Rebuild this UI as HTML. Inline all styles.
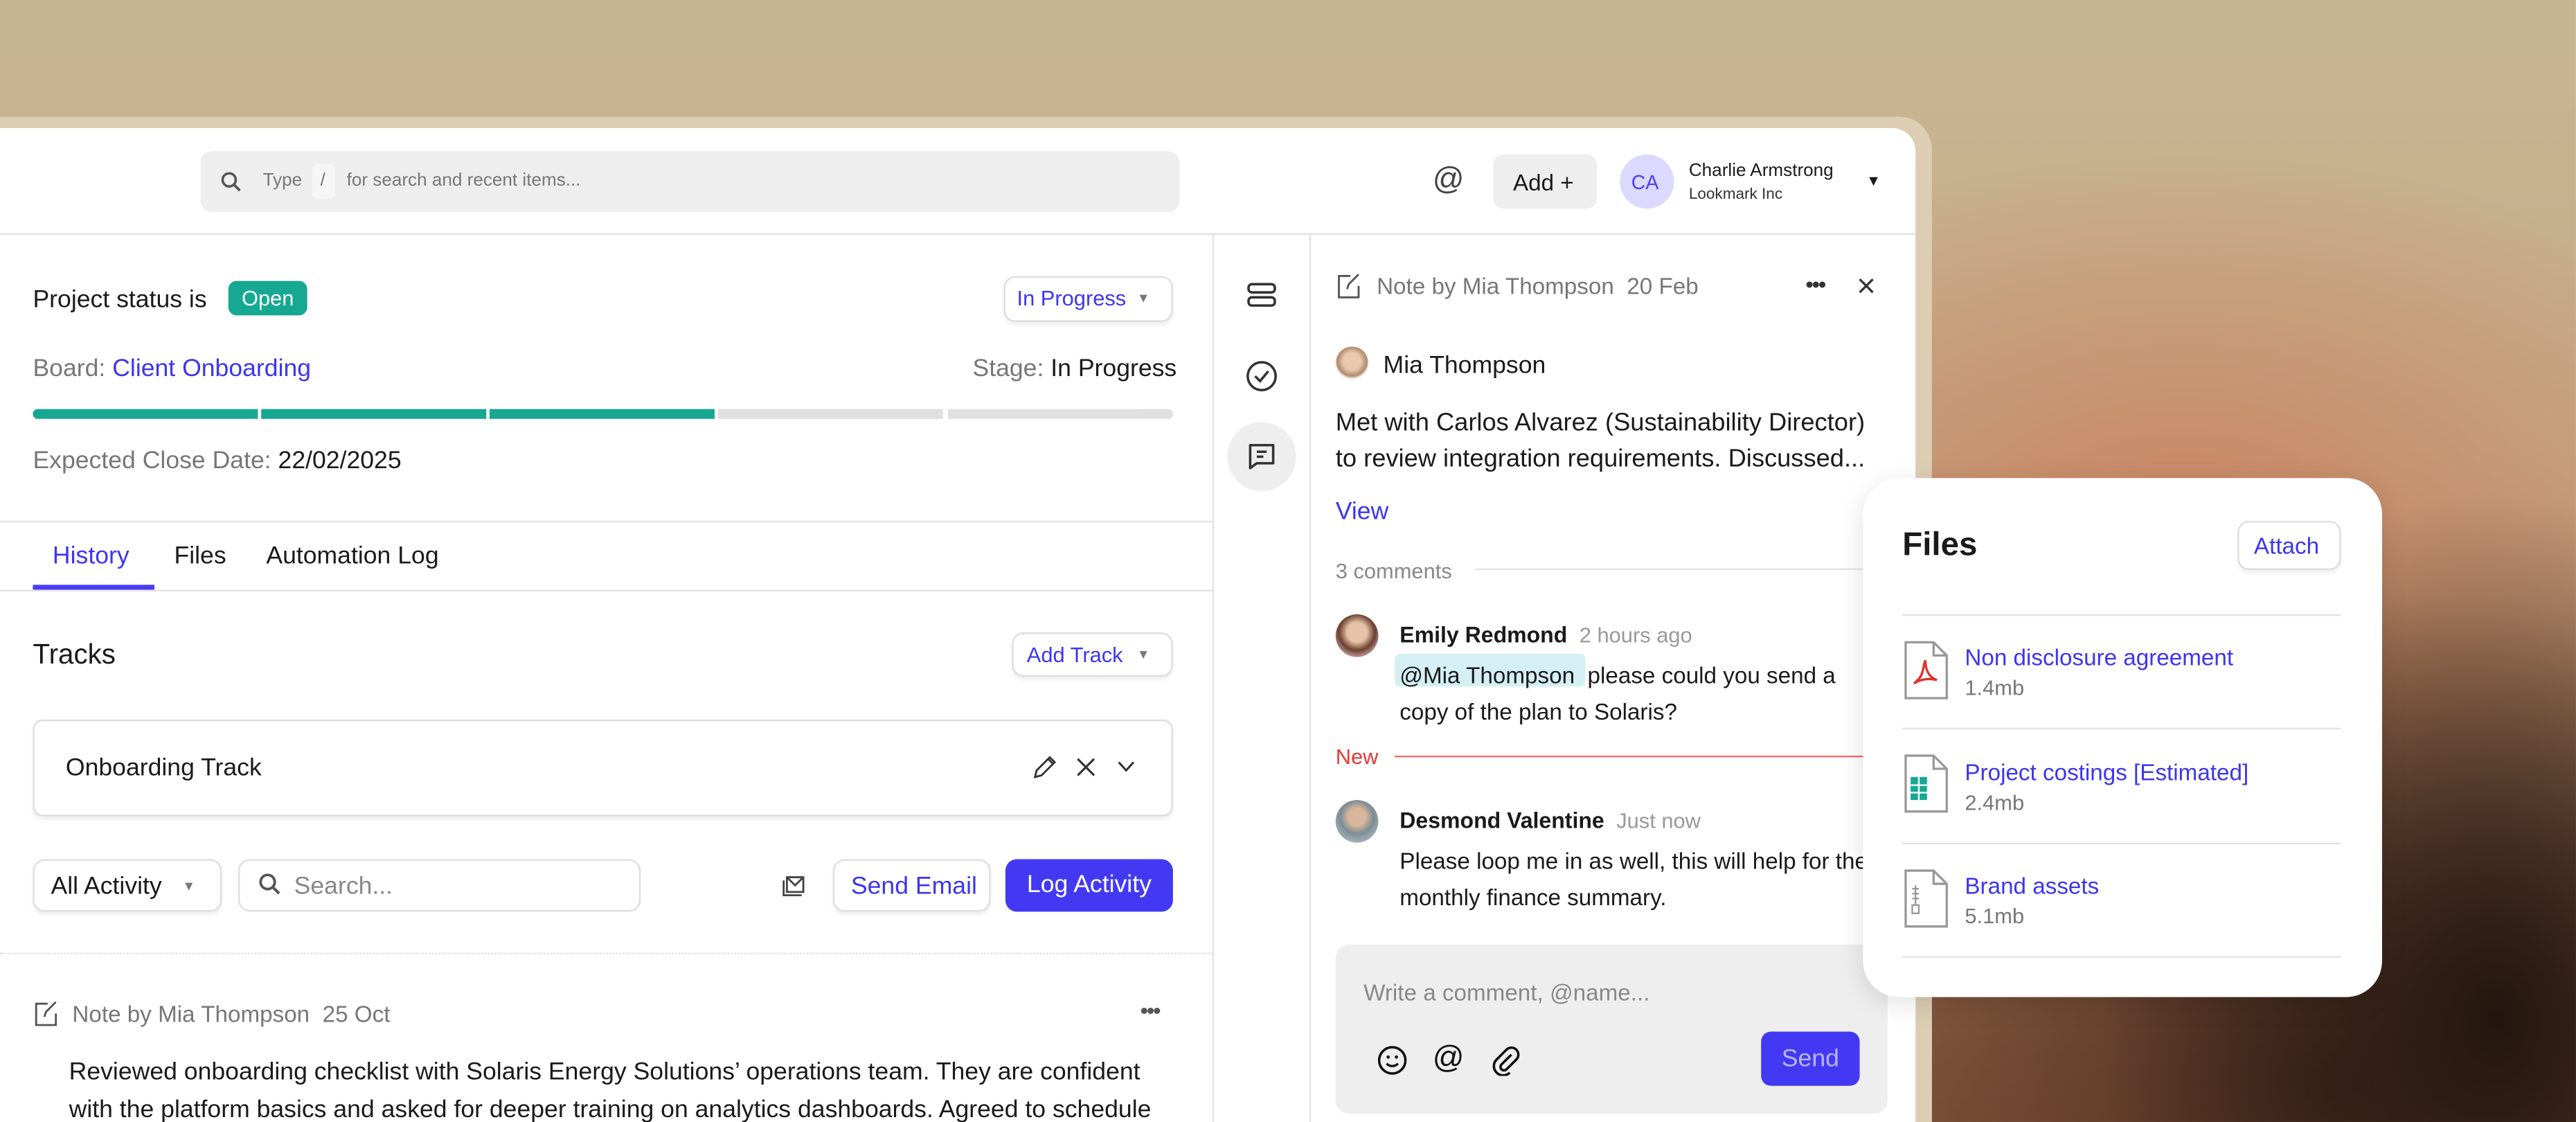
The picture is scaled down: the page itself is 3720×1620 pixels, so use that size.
<!DOCTYPE html>
<html style="overflow:hidden;width:3720px;height:1620px"><head><meta charset="utf-8"><style>
*{box-sizing:border-box;margin:0;padding:0}
body{width:3720px;height:1620px;overflow:hidden;font-family:"Liberation Sans",sans-serif;color:#1a1a1a}
#s{width:1568px;height:683px;transform:scale(2.3724,2.3718);transform-origin:0 0;position:absolute;left:0;top:0;overflow:hidden;
background:
radial-gradient(ellipse 240px 320px at 1520px 620px,#24160f 0%,rgba(36,22,15,0) 100%),
radial-gradient(ellipse 420px 300px at 1420px 660px,#4a2c1e 0%,rgba(74,44,30,0) 100%),
radial-gradient(ellipse 380px 240px at 1330px 330px,#c98461 0%,rgba(201,132,97,0) 100%),
linear-gradient(180deg,#c8b692 0%,#c5ab88 40%,#9a6447 100%)}
.a{position:absolute}
.frame{left:-20px;top:71px;width:1196px;height:612px;background:#dccdb3;border-radius:20px 20px 0 0}
.win{left:0;top:78px;width:1166px;height:605px;background:#fff;border-top-right-radius:14px;overflow:hidden}
.t{position:absolute;white-space:nowrap}
.blue{color:#3d35f0}
.g{color:#777}
.btn{position:absolute;border:1px solid #dedede;border-radius:7px;background:#fff;box-shadow:0 2px 2px rgba(0,0,0,.06)}
.line{position:absolute;background:#e3e3e3;height:1px}
</style></head><body><div id="s">
<div class="a frame"></div>
<div class="a win">
 <div class="a" style="left:122px;top:14px;width:596px;height:37px;background:#eee;border-radius:7px"></div>
 <svg class="a" style="left:134px;top:26px" width="13" height="13" viewBox="0 0 13 13"><circle cx="5.5" cy="5.5" r="4" fill="none" stroke="#555" stroke-width="1.5"/><path d="M8.5 8.5L12 12" stroke="#555" stroke-width="1.6"/></svg>
 <div class="t g" style="left:160px;top:26px;font-size:11px">Type</div>
 <div class="a" style="left:190px;top:22px;width:14px;height:21px;background:#f6f6f6;border-radius:3px"></div>
 <div class="t g" style="left:195px;top:26px;font-size:11px">/</div>
 <div class="t g" style="left:211px;top:26px;font-size:11px">for search and recent items...</div>
 <div class="t" style="left:872px;top:21px;font-size:19px;color:#444">@</div>
 <div class="a" style="left:909px;top:16px;width:63px;height:33px;background:#eee;border-radius:6px"></div>
 <div class="t" style="left:921px;top:25px;font-size:14px">Add +</div>
 <div class="a" style="left:986px;top:16px;width:33px;height:33px;background:#dcd9ff;border-radius:50%"></div>
 <div class="t" style="left:993px;top:26px;font-size:12px;color:#4a3cf5">CA</div>
 <div class="t" style="left:1028px;top:20px;font-size:11px">Charlie Armstrong</div>
 <div class="t" style="left:1028px;top:35px;font-size:9.5px;color:#333">Lookmark Inc</div>
 <div class="t" style="left:1136px;top:27px;font-size:9px">▼</div>
 <div class="line" style="left:0;top:64px;width:1166px"></div>
 <div class="a" style="left:738px;top:64px;width:1px;height:541px;background:#e3e3e3"></div>
 <div class="a" style="left:797px;top:64px;width:1px;height:541px;background:#e3e3e3"></div>

 <div class="t" style="left:20px;top:96px;font-size:15px">Project status is</div>
 <div class="a" style="left:139px;top:93px;width:48px;height:21px;background:#16a892;border-radius:5px;color:#fff;font-size:13px;text-align:center;line-height:21px">Open</div>
 <div class="btn" style="left:611px;top:90px;width:103px;height:28px"></div>
 <div class="t blue" style="left:619px;top:96px;font-size:13px">In Progress</div>
 <div class="t" style="left:692px;top:99px;font-size:8px;color:#777">▼</div>
 <div class="t" style="left:20px;top:138px;font-size:15px;color:#777">Board: <span class="blue">Client Onboarding</span></div>
 <div class="t" style="left:592px;top:138px;font-size:15px;color:#777">Stage: <span style="color:#1a1a1a">In Progress</span></div>
 <div class="a" style="left:20px;top:171px;width:137px;height:6px;background:#16a892;border-radius:3px 0 0 3px"></div>
 <div class="a" style="left:159px;top:171px;width:137px;height:6px;background:#16a892"></div>
 <div class="a" style="left:298px;top:171px;width:137px;height:6px;background:#16a892"></div>
 <div class="a" style="left:437px;top:171px;width:137px;height:6px;background:#e0e0e0"></div>
 <div class="a" style="left:577px;top:171px;width:137px;height:6px;background:#e0e0e0;border-radius:0 3px 3px 0"></div>
 <div class="t" style="left:20px;top:194px;font-size:15px;color:#777">Expected Close Date: <span style="color:#1a1a1a">22/02/2025</span></div>
 <div class="line" style="left:0;top:239px;width:738px"></div>
 <div class="t blue" style="left:32px;top:252px;font-size:15px">History</div>
 <div class="t" style="left:106px;top:252px;font-size:15px">Files</div>
 <div class="t" style="left:162px;top:252px;font-size:15px">Automation Log</div>
 <div class="a" style="left:20px;top:278px;width:74px;height:3px;background:#4a3cf5"></div>
 <div class="line" style="left:0;top:281px;width:738px"></div>
 <div class="t" style="left:20px;top:311px;font-size:17px">Tracks</div>
 <div class="btn" style="left:616px;top:307px;width:98px;height:27px"></div>
 <div class="t blue" style="left:625px;top:313px;font-size:13px">Add Track</div>
 <div class="t" style="left:692px;top:316px;font-size:8px;color:#777">▼</div>
 <div class="btn" style="left:20px;top:360px;width:694px;height:59px;border-radius:6px"></div>
 <div class="t" style="left:40px;top:381px;font-size:15px">Onboarding Track</div>
 <svg class="a" style="left:628px;top:381px" width="16" height="16" viewBox="0 0 16 16"><path d="M2 14l1-4 8-8 3 3-8 8z M10 3l3 3" fill="none" stroke="#333" stroke-width="1.2"/></svg>
 <svg class="a" style="left:655px;top:383px" width="12" height="12" viewBox="0 0 12 12"><path d="M1 1l10 10M11 1L1 11" stroke="#333" stroke-width="1.3"/></svg>
 <svg class="a" style="left:680px;top:385px" width="11" height="8" viewBox="0 0 11 8"><path d="M1 1l4.5 5L10 1" fill="none" stroke="#333" stroke-width="1.3"/></svg>
 <div class="btn" style="left:20px;top:445px;width:115px;height:32px"></div>
 <div class="t" style="left:31px;top:453px;font-size:15px">All Activity</div>
 <div class="t" style="left:111px;top:457px;font-size:8px;color:#777">▼</div>
 <div class="btn" style="left:145px;top:445px;width:245px;height:32px;box-shadow:none"></div>
 <svg class="a" style="left:157px;top:453px" width="14" height="14" viewBox="0 0 13 13"><circle cx="5.5" cy="5.5" r="4" fill="none" stroke="#555" stroke-width="1.5"/><path d="M8.5 8.5L12 12" stroke="#555" stroke-width="1.6"/></svg>
 <div class="t" style="left:179px;top:453px;font-size:15px;color:#888">Search...</div>
 <svg class="a" style="left:474px;top:453px" width="16" height="16" viewBox="0 0 16 16"><path d="M3 5v9h11 M5 3h10v9H5z M5 3l5 5 5-5" fill="none" stroke="#444" stroke-width="1.2"/></svg>
 <div class="btn" style="left:507px;top:445px;width:96px;height:32px"></div>
 <div class="t blue" style="left:518px;top:453px;font-size:15px">Send Email</div>
 <div class="a" style="left:612px;top:445px;width:102px;height:32px;background:#4339f2;border-radius:7px;color:#fff;font-size:15px;text-align:center;line-height:32px">Log Activity</div>
 <div class="a" style="left:0;top:502px;width:738px;border-top:1px dotted #ddd"></div>
 <svg class="a" style="left:20px;top:531px" width="16" height="16" viewBox="0 0 16 16"><path d="M9 2H2v13h12V8 M7 10l1-3 6-6" fill="none" stroke="#555" stroke-width="1.2"/></svg>
 <div class="t g" style="left:44px;top:531px;font-size:14px">Note by Mia Thompson &nbsp;25 Oct</div>
 <div class="t" style="left:694px;top:529px;font-size:14px;color:#555;letter-spacing:-1px">•••</div>
 <div class="t" style="left:42px;top:563px;height:42px;overflow:hidden;font-size:15px;line-height:23px">Reviewed onboarding checklist with Solaris Energy Solutions’ operations team. They are confident<br>with the platform basics and asked for deeper training on analytics dashboards. Agreed to schedule</div>

 <svg class="a" style="left:759px;top:93px" width="18" height="18" viewBox="0 0 18 18"><rect x="1" y="2" width="16" height="5" rx="2" fill="none" stroke="#333" stroke-width="1.5"/><rect x="1" y="10" width="16" height="5" rx="2" fill="none" stroke="#333" stroke-width="1.5"/></svg>
 <svg class="a" style="left:758px;top:141px" width="20" height="20" viewBox="0 0 20 20"><circle cx="10" cy="10" r="8.5" fill="none" stroke="#333" stroke-width="1.5"/><path d="M6 10l3 3 5-6" fill="none" stroke="#333" stroke-width="1.5"/></svg>
 <div class="a" style="left:747px;top:179px;width:42px;height:42px;background:#eee;border-radius:50%"></div>
 <svg class="a" style="left:759px;top:191px" width="18" height="18" viewBox="0 0 18 18"><path d="M2 2h14v11H6l-4 3z M6 6h6 M6 9h4" fill="none" stroke="#333" stroke-width="1.5" stroke-linejoin="round"/></svg>

 <svg class="a" style="left:813px;top:88px" width="16" height="16" viewBox="0 0 16 16"><path d="M9 2H2v13h12V8 M7 10l1-3 6-6" fill="none" stroke="#555" stroke-width="1.2"/></svg>
 <div class="t g" style="left:838px;top:88px;font-size:14px">Note by Mia Thompson &nbsp;20 Feb</div>
 <div class="t" style="left:1099px;top:87px;font-size:14px;color:#333;letter-spacing:-1px">•••</div>
 <svg class="a" style="left:1131px;top:91px" width="10" height="10" viewBox="0 0 10 10"><path d="M1 1l8 8M9 1L1 9" stroke="#333" stroke-width="1.4"/></svg>
 <div class="a" style="left:813px;top:133px;width:20px;height:20px;border-radius:50%;background:radial-gradient(circle at 50% 45%,#e8c9b0 35%,#b08a6a 60%,#eee 70%)"></div>
 <div class="t" style="left:842px;top:136px;font-size:15px">Mia Thompson</div>
 <div class="t" style="left:813px;top:169px;font-size:15.3px;line-height:22px">Met with Carlos Alvarez (Sustainability Director)<br>to review integration requirements. Discussed...</div>
 <div class="t blue" style="left:813px;top:225px;font-size:15px">View</div>
 <div class="t g" style="left:813px;top:262px;font-size:13px;color:#888">3 comments</div>
 <div class="line" style="left:898px;top:268px;width:268px"></div>
 <div class="a" style="left:813px;top:296px;width:26px;height:26px;border-radius:50%;background:radial-gradient(circle at 50% 42%,#e6c2a6 30%,#6b4030 55%,#caa 80%)"></div>
 <div class="t" style="left:852px;top:301px;font-size:13.5px;font-weight:bold">Emily Redmond <span style="font-weight:normal;color:#999;font-size:13px">&nbsp;2 hours ago</span></div>
 <div class="a" style="left:849px;top:320px;width:116px;height:20px;background:#d5f0f4;border-radius:3px"></div>
 <div class="t" style="left:852px;top:322px;font-size:14px;line-height:22px">@Mia Thompson &nbsp;please could you send a<br>copy of the plan to Solaris?</div>
 <div class="t" style="left:813px;top:375px;font-size:13px;color:#e53935">New</div>
 <div class="a" style="left:849px;top:382px;width:317px;height:1px;background:#ef6b6b"></div>
 <div class="a" style="left:813px;top:409px;width:26px;height:26px;border-radius:50%;background:radial-gradient(circle at 50% 40%,#d9b79c 25%,#7d8c95 50%,#a8b6bf 80%)"></div>
 <div class="t" style="left:852px;top:414px;font-size:13.5px;font-weight:bold">Desmond Valentine <span style="font-weight:normal;color:#999;font-size:13px">&nbsp;Just now</span></div>
 <div class="t" style="left:852px;top:435px;font-size:14px;line-height:22px">Please loop me in as well, this will help for the<br>monthly finance summary.</div>
 <div class="a" style="left:813px;top:497px;width:336px;height:103px;background:#eeeeee;border-radius:8px"></div>
 <div class="t" style="left:830px;top:518px;font-size:14px;color:#888">Write a comment, @name...</div>
 <svg class="a" style="left:838px;top:558px" width="19" height="19" viewBox="0 0 19 19"><circle cx="9.5" cy="9.5" r="8" fill="none" stroke="#111" stroke-width="1.5"/><circle cx="7" cy="7.5" r="1" fill="#111"/><circle cx="12" cy="7.5" r="1" fill="#111"/><path d="M6 11.5q3.5 3 7 0" fill="none" stroke="#111" stroke-width="1.4"/></svg>
 <div class="t" style="left:872px;top:556px;font-size:19px;color:#111">@</div>
 <svg class="a" style="left:907px;top:558px" width="18" height="19" viewBox="0 0 18 19"><path d="M13 6l-6 6a2 2 0 0 0 3 3l6-6a4 4 0 0 0-6-6L4 9a5.5 5.5 0 0 0 8 8" fill="none" stroke="#111" stroke-width="1.5"/></svg>
 <div class="a" style="left:1072px;top:550px;width:60px;height:33px;background:#4339f2;border-radius:6px;color:#b9b5ff;font-size:15px;text-align:center;line-height:33px">Send</div>
</div>

<div class="a" style="left:1134px;top:291px;width:316px;height:316px;background:#fff;border-radius:22px;box-shadow:0 4px 16px rgba(0,0,0,.12)">
 <div class="t" style="left:24px;top:30px;font-size:20px;font-weight:bold">Files</div>
 <div class="btn" style="left:228px;top:26px;width:63px;height:30px"></div>
 <div class="t blue" style="left:238px;top:33px;font-size:14px">Attach</div>
 <div class="line" style="left:24px;top:83px;width:267px"></div>
 <div class="line" style="left:24px;top:152px;width:267px"></div>
 <div class="line" style="left:24px;top:222px;width:267px"></div>
 <div class="line" style="left:24px;top:291px;width:267px"></div>
 <svg class="a" style="left:24px;top:99px" width="28" height="37" viewBox="0 0 28 37"><path d="M2 1h17l8 8v26H2z M19 1v8h8" fill="#fff" stroke="#999" stroke-width="1.4"/><path d="M14 12c-2 4 0 9-7 14 5-3 10-3 14-2-5-2-7-6-7-12z" fill="none" stroke="#e0312b" stroke-width="1.4"/></svg>
 <div class="t blue" style="left:62px;top:101px;font-size:14px">Non disclosure agreement</div>
 <div class="t g" style="left:62px;top:120px;font-size:13px">1.4mb</div>
 <svg class="a" style="left:24px;top:168px" width="28" height="37" viewBox="0 0 28 37"><path d="M2 1h17l8 8v26H2z M19 1v8h8" fill="#fff" stroke="#999" stroke-width="1.4"/><rect x="5" y="14" width="10" height="14" fill="#16a892"/><path d="M5 19h10M5 23.5h10M10 14v14" stroke="#fff" stroke-width="1"/></svg>
 <div class="t blue" style="left:62px;top:171px;font-size:14px">Project costings [Estimated]</div>
 <div class="t g" style="left:62px;top:190px;font-size:13px">2.4mb</div>
 <svg class="a" style="left:24px;top:238px" width="28" height="37" viewBox="0 0 28 37"><path d="M2 1h17l8 8v26H2z M19 1v8h8" fill="#fff" stroke="#999" stroke-width="1.4"/><path d="M8 10v12 M6 12h4M6 15h4M6 18h4" stroke="#999" stroke-width="1"/><rect x="6" y="22" width="4" height="5" fill="none" stroke="#999"/></svg>
 <div class="t blue" style="left:62px;top:240px;font-size:14px">Brand assets</div>
 <div class="t g" style="left:62px;top:259px;font-size:13px">5.1mb</div>
</div>
</div></body></html>
